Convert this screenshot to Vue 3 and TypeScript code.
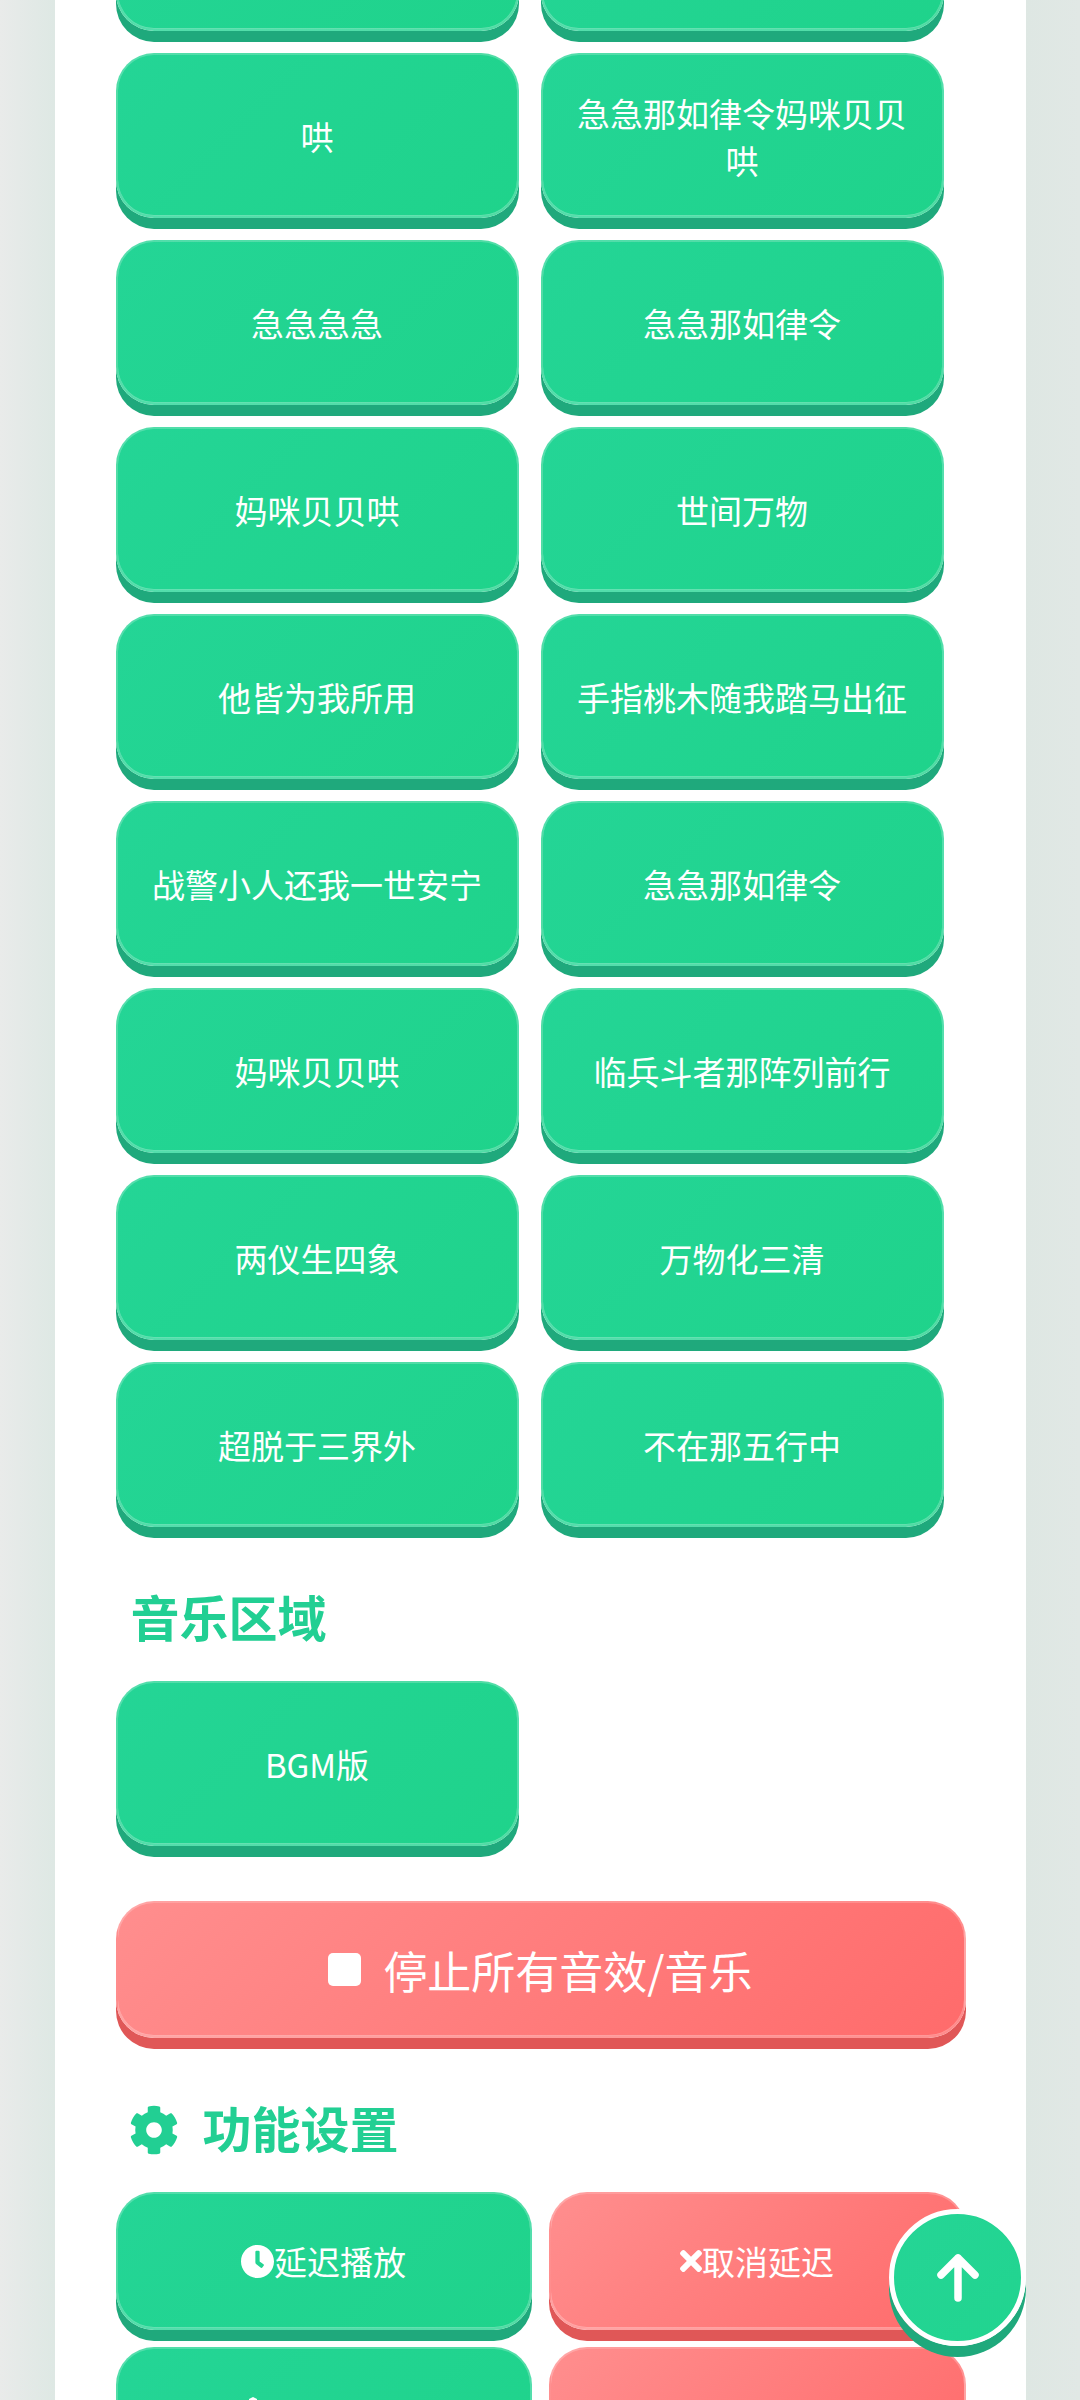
<script setup lang="ts">
const sounds: string[] = [
  '', '',
  '哄', '急急那如律令妈咪贝贝哄',
  '急急急急', '急急那如律令',
  '妈咪贝贝哄', '世间万物',
  '他皆为我所用', '手指桃木随我踏马出征',
  '战警小人还我一世安宁', '急急那如律令',
  '妈咪贝贝哄', '临兵斗者那阵列前行',
  '两仪生四象', '万物化三清',
  '超脱于三界外', '不在那五行中',
]
</script>

<template>
  <div class="page">
    <main class="panel">
      <section class="sound-grid">
        <button v-for="(s, i) in sounds" :key="i" class="btn green tile">{{ s }}</button>
      </section>

      <h2 class="title music-title">音乐区域</h2>
      <section class="sound-grid">
        <button class="btn green tile">BGM版</button>
      </section>

      <button class="btn red stop">
        <span class="stop-square"></span>
        <span>停止所有音效/音乐</span>
      </button>

      <h2 class="title settings-title">
        <svg class="gear" viewBox="0 0 512 512" aria-hidden="true">
          <path d="M487.4 315.7l-42.6-24.6c4.3-23.2 4.3-47 0-70.2l42.6-24.6c4.9-2.8 7.1-8.6 5.5-14-11.1-35.6-30-67.8-54.7-94.6-3.8-4.1-10-5.1-14.8-2.3L380.8 110c-17.9-15.4-38.5-27.3-60.8-35.1V25.8c0-5.6-3.9-10.5-9.4-11.7-36.7-8.2-74.3-7.8-109.2 0-5.5 1.2-9.4 6.1-9.4 11.7V75c-22.2 7.9-42.8 19.8-60.8 35.1L88.7 85.5c-4.9-2.8-11-1.9-14.8 2.3-24.7 26.7-43.6 58.9-54.7 94.6-1.7 5.4.6 11.2 5.5 14L67.3 221c-4.3 23.2-4.3 47 0 70.2l-42.6 24.6c-4.9 2.8-7.1 8.6-5.5 14 11.1 35.6 30 67.8 54.7 94.6 3.8 4.1 10 5.1 14.8 2.3l42.6-24.6c17.9 15.4 38.5 27.3 60.8 35.1v49.2c0 5.6 3.9 10.5 9.4 11.7 36.7 8.2 74.3 7.8 109.2 0 5.5-1.2 9.4-6.1 9.4-11.7v-49.2c22.2-7.9 42.8-19.8 60.8-35.1l42.6 24.6c4.9 2.8 11 1.9 14.8-2.3 24.7-26.7 43.6-58.9 54.7-94.6 1.5-5.5-.7-11.3-5.6-14.1zM256 336c-44.1 0-80-35.9-80-80s35.9-80 80-80 80 35.9 80 80-35.9 80-80 80z" />
        </svg>
        <span>功能设置</span>
      </h2>

      <section class="settings-grid">
        <button class="btn green setting">
          <svg class="clock" viewBox="8 8 496 496" aria-hidden="true">
            <path d="M256,8C119,8,8,119,8,256S119,504,256,504,504,393,504,256,393,8,256,8Zm92.49,313h0l-20,25a16,16,0,0,1-22.49,2.5h0l-67-49.72a40,40,0,0,1-15-31.23V112a16,16,0,0,1,16-16h32a16,16,0,0,1,16,16V256l58,42.5A16,16,0,0,1,348.49,321Z" />
          </svg>
          <span>延迟播放</span>
        </button>
        <button class="btn red setting">
          <svg class="times" viewBox="0 0 352 512" aria-hidden="true">
            <path d="M242.72 256l100.07-100.07c12.28-12.28 12.28-32.19 0-44.48l-22.24-22.24c-12.28-12.28-32.19-12.28-44.48 0L176 189.28 75.93 89.21c-12.28-12.28-32.19-12.28-44.48 0L9.21 111.45c-12.28 12.28-12.28 32.19 0 44.48L109.28 256 9.21 356.07c-12.28 12.28-12.28 32.19 0 44.48l22.24 22.24c12.28 12.28 32.2 12.28 44.48 0L176 322.72l100.07 100.07c12.28 12.28 32.2 12.28 44.48 0l22.24-22.24c12.28-12.28 12.28-32.19 0-44.48L242.72 256z" />
          </svg>
          <span>取消延迟</span>
        </button>
        <button class="btn green setting next-row">
          <svg class="repeat" viewBox="0 0 33 38" aria-hidden="true">
            <path d="M7 2 L11 0 L15 2 L15 6 L7 6 Z" />
            <rect x="3" y="8" width="27" height="28" rx="6" />
          </svg>
        </button>
        <button class="btn red setting"></button>
      </section>
    </main>

    <button class="to-top" aria-label="返回顶部">
      <svg viewBox="0 0 42 48" width="42" height="48" aria-hidden="true">
        <path d="M21 44 V4 M4 21 L21 4 L38 21" fill="none" stroke="#fff" stroke-width="7.5" stroke-linecap="round" stroke-linejoin="round" />
      </svg>
    </button>
  </div>
</template>

<style>
html, body {
  margin: 0;
  padding: 0;
}
</style>

<style scoped>
.page {
  height: 2400px;
  overflow: hidden;
  background: linear-gradient(90deg, #e9ebea 0, #dee8e4 5%, #dee7e3 95%, #e1e8e5 100%);
  font-family: "Noto Sans CJK SC", "Noto Sans", sans-serif;
}

.panel {
  width: 971px;
  height: 2400px;
  margin: 0 auto;
  padding: 0 61px;
  box-sizing: border-box;
  background: #fff;
  overflow: hidden;
}

.sound-grid {
  display: grid;
  grid-template-columns: 403px 403px;
  grid-auto-rows: 165px;
  gap: 22px;
}

.sound-grid:first-child {
  margin-top: -134px;
}

.btn {
  box-sizing: border-box;
  border: 2px solid rgba(255, 255, 255, 0.22);
  border-radius: 38px;
  color: #fff;
  font-family: inherit;
  font-size: 33px;
  line-height: 47px;
  text-align: center;
  cursor: pointer;
}

.green {
  background: linear-gradient(135deg, #24d596, #1fd38b);
  box-shadow: 0 11px 0 #1fa97c, inset 0 -1px 0 rgba(255, 255, 255, 0.3);
}

.red {
  background: linear-gradient(135deg, #ff8e8e, #ff6b6b);
  box-shadow: 0 11px 0 #e05757, inset 0 -1px 0 rgba(255, 255, 255, 0.3);
}

.tile {
  padding: 2px 24px 0;
}

.title {
  display: flex;
  align-items: center;
  height: 72px;
  margin: 0;
  color: #22cf93;
  font-size: 49px;
  font-weight: 700;
  line-height: 72px;
}

.music-title {
  margin-top: 53px;
  margin-bottom: 29px;
  padding-left: 15px;
}

.settings-title {
  margin-top: 53px;
  margin-bottom: 29px;
  padding-left: 13px;
  gap: 24px;
}

.gear {
  width: 50px;
  height: 50px;
  margin-top: 6px;
  fill: #22cf93;
}

.stop {
  display: flex;
  align-items: center;
  justify-content: center;
  gap: 22px;
  width: 850px;
  height: 137px;
  margin-top: 55px;
  font-size: 44px;
  line-height: 60px;
}

.stop-square {
  width: 33px;
  height: 33px;
  border-radius: 5px;
  background: #fff;
}

.settings-grid {
  display: grid;
  grid-template-columns: 416px 417px;
  grid-auto-rows: 138px;
  gap: 17px;
}

.setting {
  display: flex;
  align-items: center;
  justify-content: center;
}

.next-row {
  justify-content: flex-start;
  padding-left: 124px;
}

.clock {
  width: 33px;
  height: 33px;
  fill: #fff;
}

.times {
  width: 22px;
  height: 32px;
  fill: #fff;
}

.repeat {
  width: 33px;
  height: 38px;
  fill: #fff;
}

.to-top {
  position: fixed;
  right: 54px;
  top: 2209px;
  display: flex;
  align-items: center;
  justify-content: center;
  box-sizing: border-box;
  width: 137px;
  height: 137px;
  padding: 0;
  border: 5px solid #fff;
  border-radius: 50%;
  background: linear-gradient(135deg, #25d596, #21d48f);
  box-shadow: 0 11px 0 #1fa97c;
  cursor: pointer;
}
</style>
